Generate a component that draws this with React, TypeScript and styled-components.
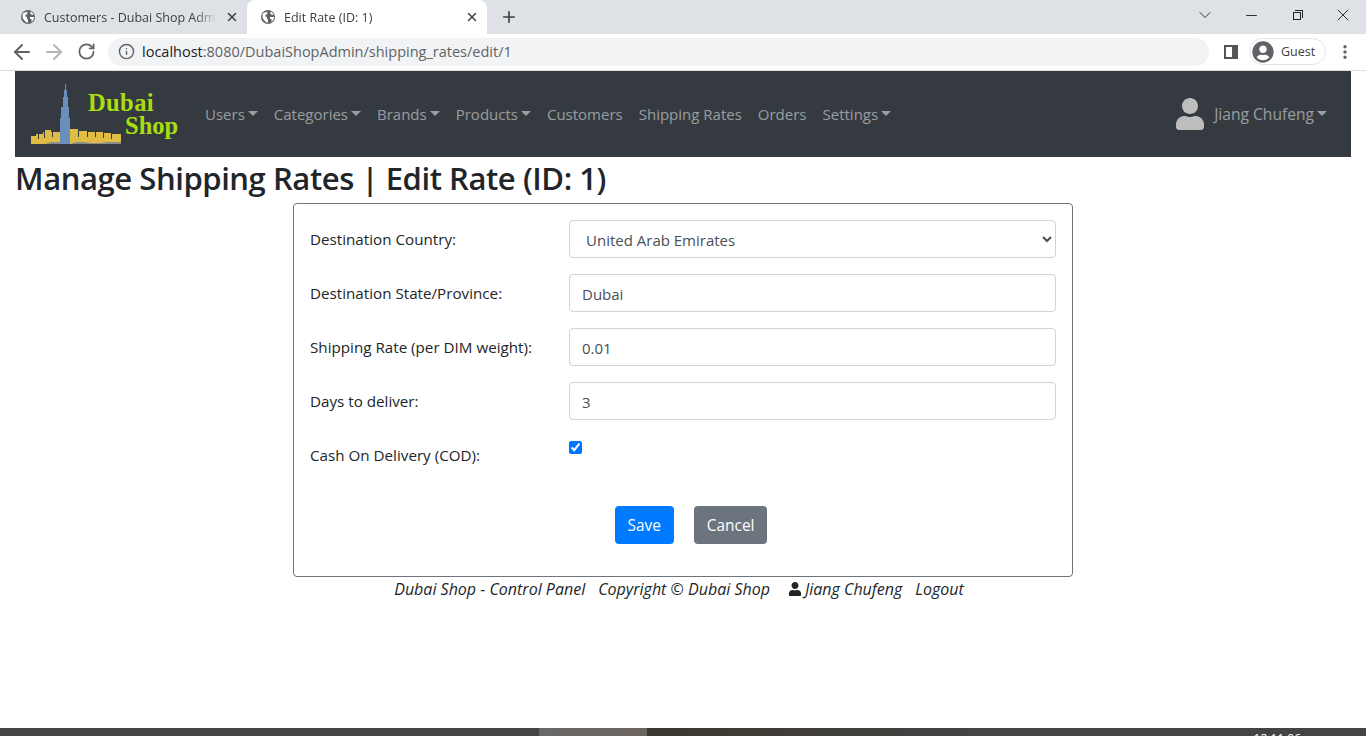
import styled, { createGlobalStyle } from 'styled-components'
import { ArrowLeft, ArrowRight, ChevronDown, EllipsisVertical, Info, Minus, Plus, RotateCw, X } from 'lucide-react'
import { FaUser, FaUserCircle } from 'react-icons/fa'

const GlobalStyle = createGlobalStyle`
  html, body {
    margin: 0;
    padding: 0;
    height: 736px;
    overflow: hidden;
    background: #fff;
    font-family: 'Open Sans', 'Noto Sans', sans-serif;
    color: #212529;
  }
  * { box-sizing: border-box; }
`

const Page = styled.div`
  height: 736px;
  display: flex;
  flex-direction: column;
`

const TabStrip = styled.div`
  height: 34px;
  background: #dee1e6;
  display: flex;
  align-items: flex-end;
  padding-left: 7px;
  flex: none;
`

const Tab = styled.div<{ $active?: boolean }>`
  width: 240px;
  height: 34px;
  padding: 0 8px 0 14px;
  display: flex;
  align-items: center;
  gap: 9px;
  font-size: 12.5px;
  color: #3c4043;
  background: ${(p) => (p.$active ? '#fff' : 'transparent')};
  border-radius: 8px 8px 0 0;
`

const TabTitle = styled.span`
  flex: 1;
  white-space: nowrap;
  overflow: hidden;
  mask-image: linear-gradient(90deg, #000 88%, transparent 100%);
`

const NewTab = styled.div`
  width: 44px;
  display: flex;
  justify-content: center;
  align-self: center;
  color: #3c4043;
`

const WindowControls = styled.div`
  margin-left: auto;
  display: flex;
  align-self: flex-start;
  height: 30px;
  align-items: center;
  color: #222;
`

const WindowButton = styled.div`
  width: 46px;
  display: flex;
  justify-content: center;
  align-items: center;
`

const RestoreIcon = styled.div`
  width: 8px;
  height: 8px;
  border: 1px solid #222;
  position: relative;
  margin-top: 2px;
  margin-left: -1px;

  &::after {
    content: '';
    position: absolute;
    top: -3px;
    right: -3px;
    width: 7px;
    height: 7px;
    border-top: 1px solid #222;
    border-right: 1px solid #222;
  }
`

const Toolbar = styled.div`
  height: 37px;
  flex: none;
  background: #fff;
  border-bottom: 1px solid #dadce0;
  display: flex;
  align-items: center;
  padding: 0 9px 1px 6px;
`

const NavIcon = styled.div<{ $muted?: boolean }>`
  width: 32px;
  display: flex;
  justify-content: center;
  color: ${(p) => (p.$muted ? '#b4b6b9' : '#5f6368')};
`

const Omnibox = styled.div`
  width: 1101px;
  height: 28px;
  margin-left: 6px;
  border-radius: 14px;
  background: #f1f3f4;
  display: flex;
  align-items: center;
  gap: 7px;
  padding-left: 10px;
  font-size: 14.5px;
  color: #5f6368;
  flex: none;
`

const Host = styled.span`
  color: #202124;
`

const SidePanelIcon = styled.div`
  width: 14px;
  height: 14px;
  border: 2px solid #555;
  border-right-width: 6px;
  margin-left: 15px;
  flex: none;
`

const ProfileChip = styled.div`
  margin-left: 11px;
  width: 77px;
  height: 27px;
  border: 1px solid #e3e4e6;
  border-radius: 14px;
  display: flex;
  align-items: center;
  gap: 7px;
  padding-left: 2px;
  font-size: 12.5px;
  color: #3c4043;
  flex: none;
`

const MenuDots = styled.div`
  margin-left: 10px;
  display: flex;
  color: #5f6368;
`

const Content = styled.div`
  flex: 1;
  padding: 0 15px;
`

const NavBar = styled.nav`
  height: 86px;
  background: #343a40;
  display: flex;
  align-items: center;
  padding: 0 16px;
`

const Logo = styled.svg`
  width: 150px;
  height: 64px;
  flex: none;
  margin-right: 16px;
`

const NavLink = styled.a<{ $caret?: boolean }>`
  color: rgba(255, 255, 255, 0.5);
  font-size: 15px;
  padding: 0 8px;
  display: flex;
  align-items: center;
  white-space: nowrap;

  ${(p) =>
    p.$caret &&
    `&::after {
      content: '';
      margin-left: 3px;
      border-top: 5px solid rgba(255, 255, 255, 0.5);
      border-left: 5px solid transparent;
      border-right: 5px solid transparent;
      margin-top: -2px;
    }`}
`

const NavUser = styled.div`
  margin-left: auto;
  display: flex;
  align-items: center;
  color: #bdbdbd;

  ${NavLink} {
    font-size: 15.6px;
  }
`

const Heading = styled.h2`
  margin: 0;
  font-size: 31px;
  line-height: 42px;
  font-weight: 600;
  letter-spacing: -0.43px;
`

const Form = styled.form`
  width: 780px;
  height: 374px;
  margin: 4px auto 0;
  border: 1px solid #6c757d;
  border-radius: 4px;
  padding: 16px;
`

const Row = styled.div`
  display: flex;
  margin-bottom: 16px;
`

const Label = styled.label`
  width: 259px;
  flex: none;
  font-size: 15.2px;
  line-height: 38px;
`

const Field = styled.input`
  flex: 1;
  height: 38px;
  border: 1px solid #ced4da;
  border-radius: 4px;
  padding: 1px 12px 0;
  font: inherit;
  font-size: 15px;
  color: #495057;
  background: #fff;
`

const Select = styled.select`
  flex: 1;
  height: 38px;
  border: 1px solid #ced4da;
  border-radius: 4px;
  padding: 1px 12px 0;
  font: inherit;
  font-size: 15px;
  color: #495057;
  background: #fff;
`

const Check = styled.input`
  width: 13px;
  height: 13px;
  margin: 5px 0 0;
  accent-color: #0075ff;
`

const Actions = styled.div`
  display: flex;
  justify-content: center;
  gap: 20px;
  margin-top: 32px;
  padding-left: 16px;
`

const Button = styled.button<{ $variant: 'primary' | 'secondary' }>`
  height: 38px;
  padding: 0 13px;
  border: none;
  border-radius: 4px;
  font: inherit;
  font-size: 15.4px;
  color: #fff;
  background: ${(p) => (p.$variant === 'primary' ? '#007bff' : '#6c757d')};
`

const Footer = styled.div`
  display: flex;
  justify-content: center;
  align-items: center;
  gap: 13px;
  padding-right: 8px;
  font-size: 16px;
  line-height: 24px;
  font-style: italic;
`

const FooterUser = styled.span`
  display: flex;
  align-items: center;
  gap: 3px;
  margin-left: 5px;
`

const Taskbar = styled.div`
  height: 8px;
  flex: none;
  display: flex;
  overflow: hidden;
  background: linear-gradient(90deg, #3d322a 0%, #2c2a22 28%, #3f3c36 55%, #444 72%, #444 100%);
  border-right: 3px solid #444;
`

const TaskbarLeft = styled.div`
  width: 539px;
  background: #444;
`

const TaskbarActive = styled.div`
  width: 108px;
  background: linear-gradient(90deg, #686868, #6c645e);
`

const Clock = styled.div`
  margin-left: auto;
  margin-right: 62px;
  padding-top: 5px;
  font-size: 12px;
  line-height: 12px;
  color: #fff;
`

function TabGlobe() {
  return (
    <svg width="14" height="14" viewBox="0 0 14 14" style={{ flex: 'none' }}>
      <circle cx="7" cy="7" r="7" fill="#5f6368" />
      <path fill="#fff" d="M2 3.2 4.8 2l2 .6-.8 1.6-1.4.5-.2 1.5 1.6 1v1.3l1 1.2V13C4 12 2 9.5 1.4 6.5zM9.5 1.6c1.5.6 2.6 1.7 3.2 3.2H10.5l-1-1zM9 7h4c0 2-1 4-2.6 5L10.8 9.5 9 8.8z" />
    </svg>
  )
}

function App() {
  const country = 'United Arab Emirates'

  return (
    <Page>
      <GlobalStyle />
      <TabStrip>
        <Tab>
          <TabGlobe />
          <TabTitle>Customers - Dubai Shop Admin</TabTitle>
          <X size={14} strokeWidth={2.5} />
        </Tab>
        <Tab $active>
          <TabGlobe />
          <TabTitle>Edit Rate (ID: 1)</TabTitle>
          <X size={14} strokeWidth={2.5} />
        </Tab>
        <NewTab><Plus size={18} strokeWidth={2.2} /></NewTab>
        <WindowControls>
          <WindowButton><ChevronDown size={20} strokeWidth={1.1} /></WindowButton>
          <WindowButton><Minus size={17} strokeWidth={1.3} /></WindowButton>
          <WindowButton><RestoreIcon /></WindowButton>
          <WindowButton><X size={20} strokeWidth={1.1} /></WindowButton>
        </WindowControls>
      </TabStrip>
      <Toolbar>
        <NavIcon><ArrowLeft size={24} strokeWidth={2} /></NavIcon>
        <NavIcon $muted><ArrowRight size={24} strokeWidth={2} /></NavIcon>
        <NavIcon><RotateCw size={19} strokeWidth={2.2} /></NavIcon>
        <Omnibox>
          <Info size={17} />
          <span><Host>localhost</Host>:8080/DubaiShopAdmin/shipping_rates/edit/1</span>
        </Omnibox>
        <SidePanelIcon />
        <ProfileChip>
          <FaUserCircle size={22} color="#5f6368" />
          Guest
        </ProfileChip>
        <MenuDots><EllipsisVertical size={18} strokeWidth={2.5} /></MenuDots>
      </Toolbar>
      <Content>
        <NavBar>
          <Logo viewBox="0 0 150 64">
            <path fill="#dfbd45" d="M0 54h5v-2h7v-2h2v-2h6v2h9v12H0zM39 47h8v2h9v1h16v1h8v1h10v10H39z" />
            <path fill="#343a40" d="M7 52h1v5H7zM13 50h1v6h-1zM21 50h1v5h-1zM47 49h1v6h-1zM56 50h1v5h-1zM64 50h1v5h-1zM72 51h1v5h-1zM80 52h1v5h-1z" />
            <path fill="#8c8c8a" d="M14 62l6-2h9v2zM39 62l6-2h9l6 1h10l6-1h14v2z" />
            <path fill="#6a8fbd" d="M34 2h1v6h1v7h1v10h1v11h1v26H29V36h1V25h2V15h1V8h1z" />
            <text x="57" y="29" fontFamily="Liberation Serif" fontWeight="700" fontSize="24.5" letterSpacing="0.4" fill="#aadd11">Dubai</text>
            <text x="94" y="52" fontFamily="Liberation Serif" fontWeight="700" fontSize="24.5" fill="#aadd11">Shop</text>
          </Logo>
          <NavLink $caret>Users</NavLink>
          <NavLink $caret>Categories</NavLink>
          <NavLink $caret>Brands</NavLink>
          <NavLink $caret>Products</NavLink>
          <NavLink>Customers</NavLink>
          <NavLink>Shipping Rates</NavLink>
          <NavLink>Orders</NavLink>
          <NavLink $caret>Settings</NavLink>
          <NavUser>
            <FaUser size={32} />
            <NavLink $caret>Jiang Chufeng</NavLink>
          </NavUser>
        </NavBar>
        <Heading>Manage Shipping Rates | Edit Rate (ID: 1)</Heading>
        <Form>
          <Row>
            <Label>Destination Country:</Label>
            <Select defaultValue={country}><option>{country}</option></Select>
          </Row>
          <Row>
            <Label>Destination State/Province:</Label>
            <Field defaultValue="Dubai" />
          </Row>
          <Row>
            <Label>Shipping Rate (per DIM weight):</Label>
            <Field defaultValue="0.01" />
          </Row>
          <Row>
            <Label>Days to deliver:</Label>
            <Field defaultValue="3" />
          </Row>
          <Row>
            <Label>Cash On Delivery (COD):</Label>
            <div><Check type="checkbox" defaultChecked /></div>
          </Row>
          <Actions>
            <Button $variant="primary" type="button">Save</Button>
            <Button $variant="secondary" type="button">Cancel</Button>
          </Actions>
        </Form>
        <Footer>
          <span>Dubai Shop - Control Panel</span>
          <span>Copyright © Dubai Shop</span>
          <FooterUser><FaUser size={14} />Jiang Chufeng</FooterUser>
          <span>Logout</span>
        </Footer>
      </Content>
      <Taskbar>
        <TaskbarLeft />
        <TaskbarActive />
        <Clock>12:11:06</Clock>
      </Taskbar>
    </Page>
  )
}

export default App
